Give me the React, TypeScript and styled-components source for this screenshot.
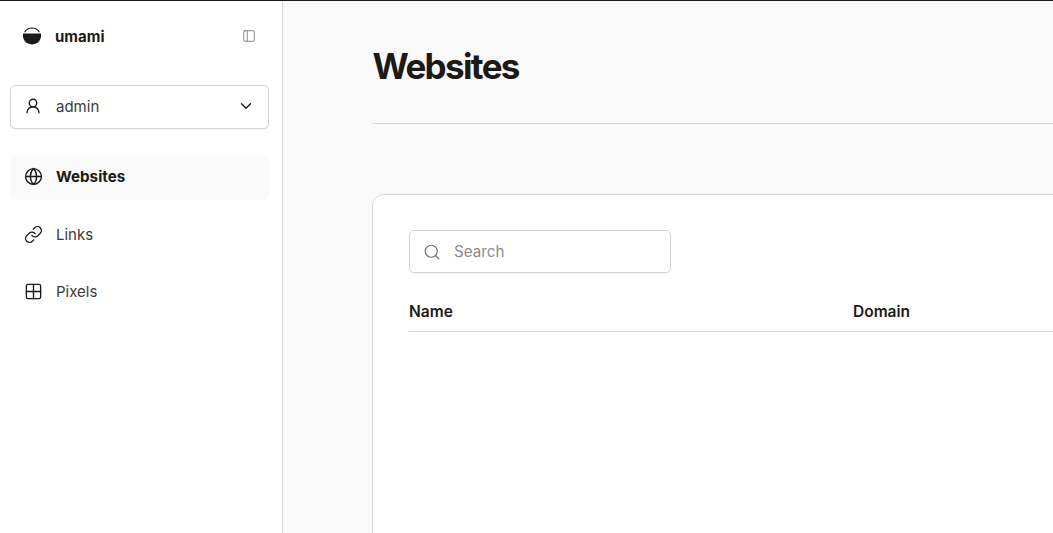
import React from "react";
import styled, { createGlobalStyle } from "styled-components";
import { ChevronDown, Globe, Grid2x2, Link, PanelLeft, Search, UserRound } from "lucide-react";

const Global = createGlobalStyle`
  html, body { margin: 0; padding: 0; height: 100%; overflow: hidden; background: #fff; }
  #root { height: 100%; }
  * { box-sizing: border-box; }
`;

const Shell = styled.div`
  display: flex;
  height: 533px;
  width: 1053px;
  overflow: hidden;
  border-top: 1px solid #1a1a1a;
  font-family: Inter, "Liberation Sans", sans-serif;
  color: #1c1917;
`;

const Sidebar = styled.aside`
  flex: 0 0 283px;
  display: flex;
  flex-direction: column;
  padding: 0 13px 0 10px;
  background: #fff;
  border-right: 1px solid #d6d6d6;
`;

const Brand = styled.div`
  display: flex;
  align-items: center;
  height: 70px;
  padding: 0 13px;
  gap: 14px;
`;

const BrandName = styled.span`
  flex: 1;
  font-size: 15px;
  font-weight: 700;
`;

const AccountSelect = styled.div`
  display: flex;
  align-items: center;
  height: 44px;
  margin-top: 14px;
  padding: 0 13px 2px 13px;
  gap: 14px;
  background: #fff;
  border: 1px solid #d4d4d4;
  border-radius: 5px;
  box-shadow: 0 1px 2px rgba(0, 0, 0, 0.05);
  font-size: 15px;
  color: #3a3a3a;
`;

const AccountName = styled.span`
  flex: 1;
`;

const Nav = styled.nav`
  display: flex;
  flex-direction: column;
  margin-top: 26px;
  gap: 12px;
`;

const NavItem = styled.div<{ $active?: boolean }>`
  display: flex;
  align-items: center;
  height: 45px;
  padding: 0 13px ${(p) => (p.$active ? "2px" : "0")} 13.5px;
  gap: 13.5px;
  border-radius: 6px;
  font-size: ${(p) => (p.$active ? "15.2px" : "15px")};
  font-weight: ${(p) => (p.$active ? 700 : 400)};
  color: ${(p) => (p.$active ? "#1c1917" : "#3a3a3a")};
  background: ${(p) => (p.$active ? "#fafafa" : "transparent")};
`;

const Main = styled.main`
  flex: 1;
  min-width: 0;
  background: #f9f9f9;
  padding: 0 0 0 89px;
`;

const PageHeader = styled.header`
  width: 900px;
  height: 123px;
  padding-top: 42px;
  border-bottom: 1px solid #d6d6d6;
`;

const Title = styled.h1`
  margin: 0 0 0 0.5px;
  font-size: 35px;
  line-height: 46px;
  font-weight: 700;
  letter-spacing: -1.65px;
  color: #1c1917;
`;

const Card = styled.section`
  width: 900px;
  height: 500px;
  margin-top: 70px;
  padding: 35px 36px;
  background: #fff;
  border: 1px solid #d9d9d9;
  border-radius: 12px;
`;

const SearchBox = styled.div`
  display: flex;
  align-items: center;
  width: 262px;
  height: 43px;
  padding: 0 14px 0 13px;
  gap: 13px;
  border: 1px solid #d4d4d4;
  border-radius: 5px;
  box-shadow: 0 1px 2px rgba(0, 0, 0, 0.04);
  font-size: 15.2px;
  color: #8a8a8a;
`;

const TableHead = styled.div`
  display: grid;
  grid-template-columns: 444px 1fr;
  margin-top: 28px;
  height: 31px;
  border-bottom: 1px solid #d6d6d6;
  font-size: 15.5px;
  font-weight: 600;
  line-height: 22px;
`;

const HeadCell = styled.div``;

const Logo = () => (
  <svg width="18" height="18" viewBox="0 0 18 18" aria-hidden="true">
    <path d="M1.6 5.2A8.6 8.6 0 0 1 16.4 5.2" fill="none" stroke="#1c1917" strokeWidth="1.1" />
    <path d="M0.1 6.6h17.8a8.9 8.9 0 0 1-8.9 10.8A8.9 8.9 0 0 1 0.1 6.6z" fill="#1c1917" />
  </svg>
);

export default function App() {
  return (
    <>
      <Global />
      <Shell>
        <Sidebar>
          <Brand>
            <Logo />
            <BrandName>umami</BrandName>
            <PanelLeft size={14} strokeWidth={1.5} color="#777" />
          </Brand>
          <AccountSelect>
            <UserRound size={18} strokeWidth={1.8} color="#1c1917" />
            <AccountName>admin</AccountName>
            <ChevronDown size={18} strokeWidth={1.8} color="#1c1917" />
          </AccountSelect>
          <Nav>
            <NavItem $active>
              <Globe size={19} strokeWidth={1.7} color="#1c1917" />
              Websites
            </NavItem>
            <NavItem>
              <Link size={19} strokeWidth={1.7} color="#1c1917" />
              Links
            </NavItem>
            <NavItem>
              <Grid2x2 size={19} strokeWidth={1.7} color="#1c1917" />
              Pixels
            </NavItem>
          </Nav>
        </Sidebar>
        <Main>
          <PageHeader>
            <Title>Websites</Title>
          </PageHeader>
          <Card>
            <SearchBox>
              <Search size={18} strokeWidth={1.6} color="#777" />
              Search
            </SearchBox>
            <TableHead>
              <HeadCell>Name</HeadCell>
              <HeadCell>Domain</HeadCell>
            </TableHead>
          </Card>
        </Main>
      </Shell>
    </>
  );
}
